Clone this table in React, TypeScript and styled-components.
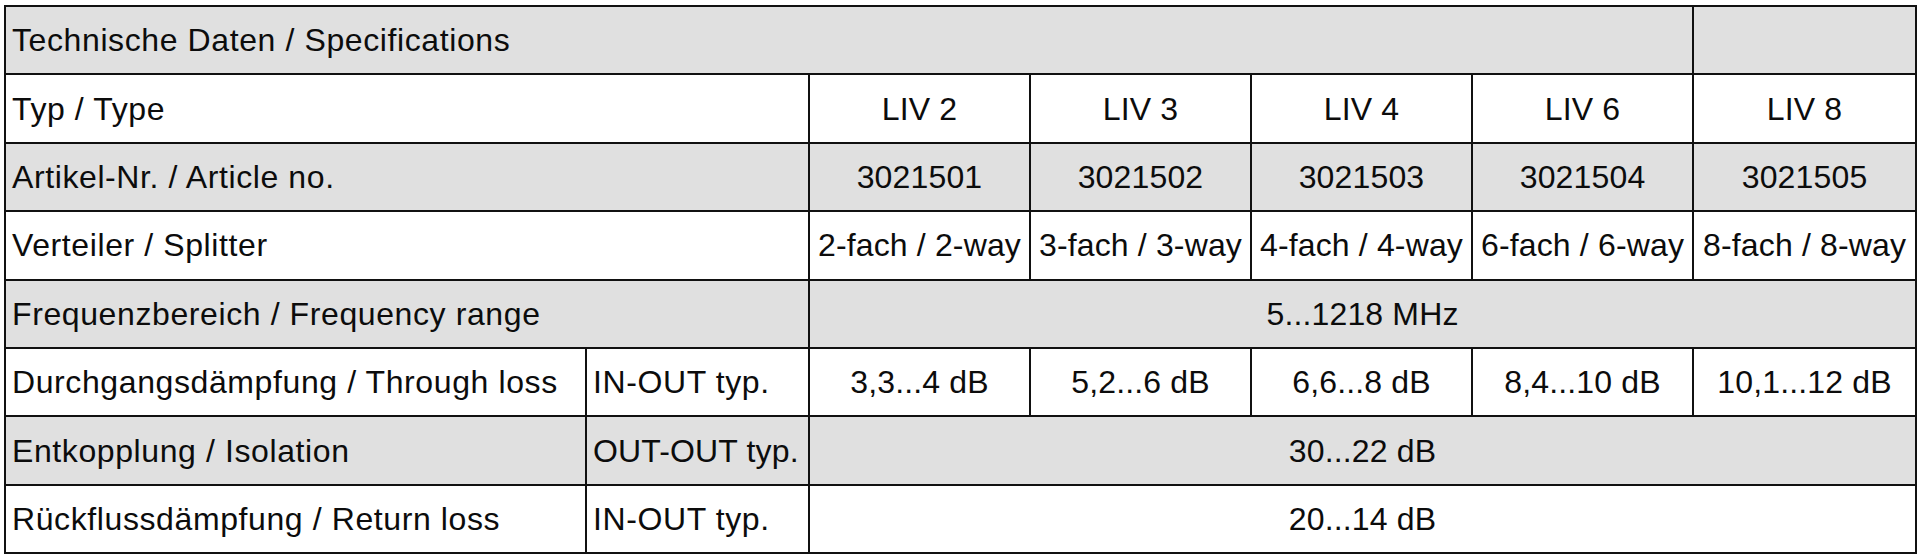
import React from "react";
import styled, { createGlobalStyle } from "styled-components";

const Global = createGlobalStyle`
  html, body { margin: 0; padding: 0; background: #ffffff; }
  body { font-family: "Liberation Sans", Arial, sans-serif; }
`;

const Page = styled.div`
  padding: 5px 5px 4px 4px;
`;

const Table = styled.table`
  width: 1911px;
  border-collapse: collapse;
  table-layout: fixed;
  font-family: "Liberation Sans", Arial, sans-serif;
  font-size: 32px;
  color: #0c0c0c;
  border: 2px solid #111;
`;

const Row = styled.tr<{ $shade?: boolean }>`
  height: 68.4px;
  background: ${(p) => (p.$shade ? "#e0e0e0" : "#ffffff")};
`;

const Cell = styled.td<{ $center?: boolean; $label?: boolean }>`
  border: 2px solid #111;
  padding: 0 6px;
  white-space: nowrap;
  overflow: hidden;
  text-align: ${(p) => (p.$center ? "center" : "left")};
  letter-spacing: ${(p) => (p.$label ? "0.6px" : "0.15px")};
  vertical-align: middle;
  line-height: 1;
`;

const types = ["LIV 2", "LIV 3", "LIV 4", "LIV 6", "LIV 8"];
const articles = ["3021501", "3021502", "3021503", "3021504", "3021505"];
const splits = ["2-fach / 2-way", "3-fach / 3-way", "4-fach / 4-way", "6-fach / 6-way", "8-fach / 8-way"];
const loss = ["3,3...4 dB", "5,2...6 dB", "6,6...8 dB", "8,4...10 dB", "10,1...12 dB"];

export default function App() {
  return (
    <>
      <Global />
      <Page>
        <Table>
          <colgroup>
            <col style={{ width: 581 }} />
            <col style={{ width: 223 }} />
            <col style={{ width: 221 }} />
            <col style={{ width: 221 }} />
            <col style={{ width: 221 }} />
            <col style={{ width: 221 }} />
            <col style={{ width: 223 }} />
          </colgroup>
          <tbody>
            <Row $shade>
              <Cell colSpan={6} $label>Technische Daten / Specifications</Cell>
              <Cell />
            </Row>
            <Row>
              <Cell colSpan={2} $label>Typ / Type</Cell>
              {types.map((t) => (
                <Cell key={t} $center>{t}</Cell>
              ))}
            </Row>
            <Row $shade>
              <Cell colSpan={2} $label>Artikel-Nr. / Article no.</Cell>
              {articles.map((t) => (
                <Cell key={t} $center>{t}</Cell>
              ))}
            </Row>
            <Row>
              <Cell colSpan={2} $label>Verteiler / Splitter</Cell>
              {splits.map((t) => (
                <Cell key={t} $center>{t}</Cell>
              ))}
            </Row>
            <Row $shade>
              <Cell colSpan={2} $label>Frequenzbereich / Frequency range</Cell>
              <Cell colSpan={5} $center>5...1218 MHz</Cell>
            </Row>
            <Row>
              <Cell $label>Durchgangsdämpfung / Through loss</Cell>
              <Cell $label>IN-OUT typ.</Cell>
              {loss.map((t) => (
                <Cell key={t} $center>{t}</Cell>
              ))}
            </Row>
            <Row $shade>
              <Cell $label>Entkopplung / Isolation</Cell>
              <Cell>OUT-OUT typ.</Cell>
              <Cell colSpan={5} $center>30...22 dB</Cell>
            </Row>
            <Row>
              <Cell $label>Rückflussdämpfung / Return loss</Cell>
              <Cell $label>IN-OUT typ.</Cell>
              <Cell colSpan={5} $center>20...14 dB</Cell>
            </Row>
          </tbody>
        </Table>
      </Page>
    </>
  );
}
